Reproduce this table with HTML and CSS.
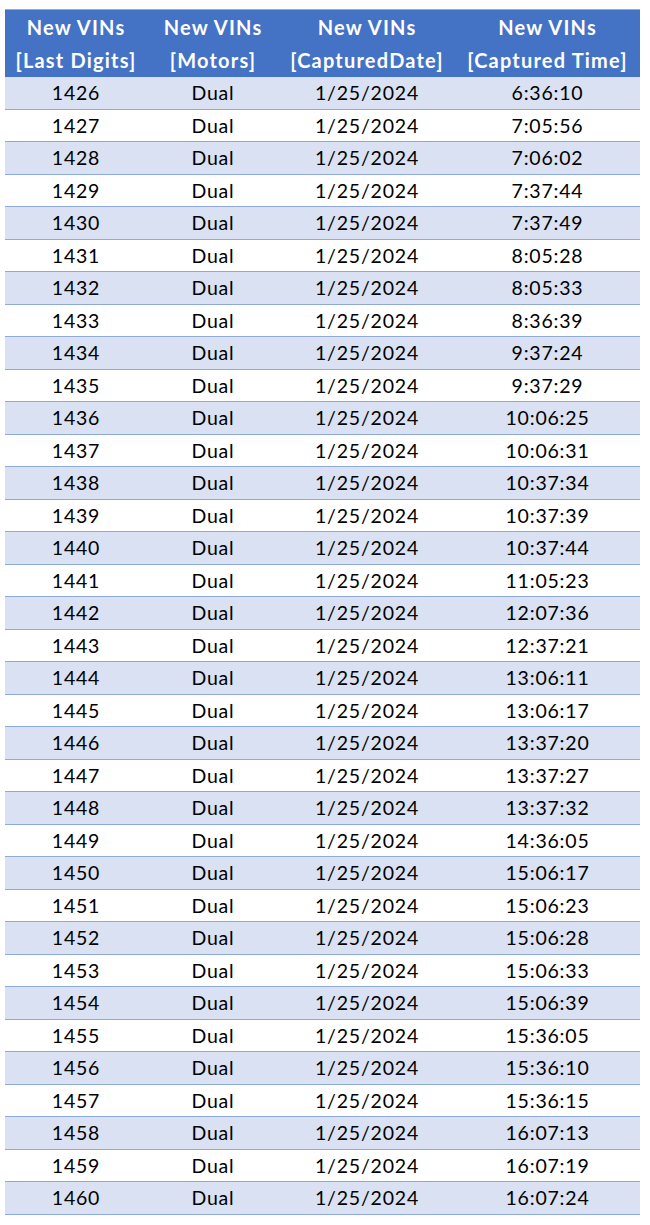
FILE: index.html
```html
<!DOCTYPE html>
<html>
<head>
<meta charset="utf-8">
<link rel="stylesheet" href="styles.css">
</head>
<body>
<table class="vins">
<colgroup><col class="c1"><col class="c2"><col class="c3"><col class="c4"></colgroup>
<thead>
<tr><th>New VINs<br>[Last Digits]</th><th>New VINs<br>[Motors]</th><th>New VINs<br>[CapturedDate]</th><th>New VINs<br>[Captured Time]</th></tr>
</thead>
<tbody>
<tr><td>1426</td><td>Dual</td><td>1/25/2024</td><td>6:36:10</td></tr>
<tr><td>1427</td><td>Dual</td><td>1/25/2024</td><td>7:05:56</td></tr>
<tr><td>1428</td><td>Dual</td><td>1/25/2024</td><td>7:06:02</td></tr>
<tr><td>1429</td><td>Dual</td><td>1/25/2024</td><td>7:37:44</td></tr>
<tr><td>1430</td><td>Dual</td><td>1/25/2024</td><td>7:37:49</td></tr>
<tr><td>1431</td><td>Dual</td><td>1/25/2024</td><td>8:05:28</td></tr>
<tr><td>1432</td><td>Dual</td><td>1/25/2024</td><td>8:05:33</td></tr>
<tr><td>1433</td><td>Dual</td><td>1/25/2024</td><td>8:36:39</td></tr>
<tr><td>1434</td><td>Dual</td><td>1/25/2024</td><td>9:37:24</td></tr>
<tr><td>1435</td><td>Dual</td><td>1/25/2024</td><td>9:37:29</td></tr>
<tr><td>1436</td><td>Dual</td><td>1/25/2024</td><td>10:06:25</td></tr>
<tr><td>1437</td><td>Dual</td><td>1/25/2024</td><td>10:06:31</td></tr>
<tr><td>1438</td><td>Dual</td><td>1/25/2024</td><td>10:37:34</td></tr>
<tr><td>1439</td><td>Dual</td><td>1/25/2024</td><td>10:37:39</td></tr>
<tr><td>1440</td><td>Dual</td><td>1/25/2024</td><td>10:37:44</td></tr>
<tr><td>1441</td><td>Dual</td><td>1/25/2024</td><td>11:05:23</td></tr>
<tr><td>1442</td><td>Dual</td><td>1/25/2024</td><td>12:07:36</td></tr>
<tr><td>1443</td><td>Dual</td><td>1/25/2024</td><td>12:37:21</td></tr>
<tr><td>1444</td><td>Dual</td><td>1/25/2024</td><td>13:06:11</td></tr>
<tr><td>1445</td><td>Dual</td><td>1/25/2024</td><td>13:06:17</td></tr>
<tr><td>1446</td><td>Dual</td><td>1/25/2024</td><td>13:37:20</td></tr>
<tr><td>1447</td><td>Dual</td><td>1/25/2024</td><td>13:37:27</td></tr>
<tr><td>1448</td><td>Dual</td><td>1/25/2024</td><td>13:37:32</td></tr>
<tr><td>1449</td><td>Dual</td><td>1/25/2024</td><td>14:36:05</td></tr>
<tr><td>1450</td><td>Dual</td><td>1/25/2024</td><td>15:06:17</td></tr>
<tr><td>1451</td><td>Dual</td><td>1/25/2024</td><td>15:06:23</td></tr>
<tr><td>1452</td><td>Dual</td><td>1/25/2024</td><td>15:06:28</td></tr>
<tr><td>1453</td><td>Dual</td><td>1/25/2024</td><td>15:06:33</td></tr>
<tr><td>1454</td><td>Dual</td><td>1/25/2024</td><td>15:06:39</td></tr>
<tr><td>1455</td><td>Dual</td><td>1/25/2024</td><td>15:36:05</td></tr>
<tr><td>1456</td><td>Dual</td><td>1/25/2024</td><td>15:36:10</td></tr>
<tr><td>1457</td><td>Dual</td><td>1/25/2024</td><td>15:36:15</td></tr>
<tr><td>1458</td><td>Dual</td><td>1/25/2024</td><td>16:07:13</td></tr>
<tr><td>1459</td><td>Dual</td><td>1/25/2024</td><td>16:07:19</td></tr>
<tr><td>1460</td><td>Dual</td><td>1/25/2024</td><td>16:07:24</td></tr>
</tbody>
</table>
</body>
</html>
```
FILE: styles.css
```css
html, body {
  margin: 0;
  padding: 0;
  background: #ffffff;
}
body {
  padding: 9px 10px 0 5px;
  font-family: Lato, "Open Sans", "Liberation Sans", sans-serif;
  color: #000000;
}
.vins {
  border-collapse: collapse;
  width: 635px;
  table-layout: fixed;
  border-top: 1px solid #8ea9db;
}
.c1 { width: 142px; }
.c2 { width: 132px; }
.c3 { width: 176px; }
.c4 { width: 185px; }
.vins th {
  background: #4472c4;
  color: #ffffff;
  font-weight: bold;
  font-size: 20px;
  letter-spacing: 1.2px;
  line-height: 33px;
  height: 67px;
  padding: 0;
  text-align: center;
  vertical-align: middle;
  white-space: nowrap;
}
.vins td {
  font-size: 19.5px;
  letter-spacing: 0.8px;
  height: 31.5px;
  padding: 0;
  text-align: center;
  vertical-align: middle;
  border-bottom: 1px solid #8ea9db;
  white-space: nowrap;
}
.vins tbody tr:nth-child(odd) td {
  background: #d9e1f2;
}
```
